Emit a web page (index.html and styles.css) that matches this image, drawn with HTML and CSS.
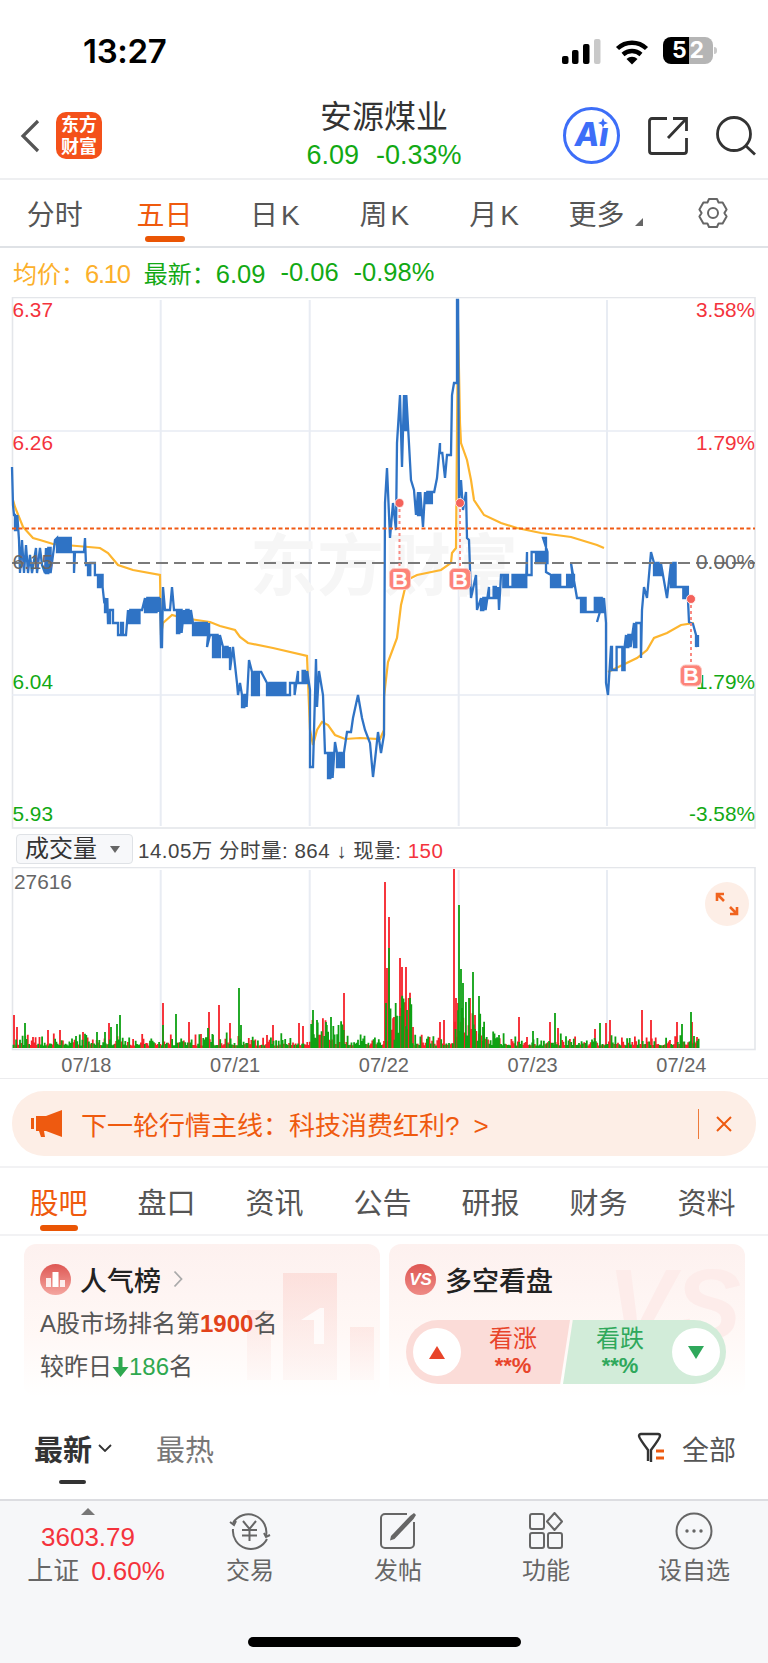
FILE: index.html
```html
<!DOCTYPE html>
<html>
<head>
    <title>安源煤业</title>
    <link rel="stylesheet" href="styles.css">
</head>
<body>
    <div class="page">
        <div class="status-bar">
            <div class="clock">13:27</div>
            <div class="status-icons">
                <svg class="signal" width="40" height="26" viewBox="0 0 40 26">
                    <rect x="1" y="17" width="6.5" height="8" rx="2" fill="#000"/>
                    <rect x="11" y="11" width="6.5" height="14" rx="2" fill="#000"/>
                    <rect x="22" y="5" width="6.5" height="20" rx="2" fill="#000"/>
                    <rect x="33" y="0" width="6.5" height="25" rx="2" fill="#c9c9c9"/>
                </svg>
                <svg class="wifi" width="34" height="26" viewBox="0 0 34 26">
                    <path d="M2.5 9.5 A21 21 0 0 1 31.5 9.5" fill="none" stroke="#000" stroke-width="4.4"/>
                    <path d="M8 15.5 A13.5 13.5 0 0 1 26 15.5" fill="none" stroke="#000" stroke-width="4.4"/>
                    <path d="M11.5 20 A8 8 0 0 1 22.5 20 L17 25.5 Z" fill="#000"/>
                </svg>
                <div class="battery"><span>5</span><span>2</span></div>
            </div>
        </div>

        <div class="nav-bar">
            <div class="nav-left">
                <svg width="20" height="34" viewBox="0 0 20 34">
                    <polyline points="18,2 3,17 18,32" fill="none" stroke="#555" stroke-width="3.2"/>
                </svg>
                <div class="logo">东方<br>财富</div>
            </div>
            <div class="nav-title">
                <div class="stock-name">安源煤业</div>
                <div class="stock-price"><span>6.09</span><span>-0.33%</span></div>
            </div>
            <div class="nav-right">
                <div class="ai-badge">Aı<svg class="ai-star" width="10" height="10" viewBox="0 0 10 10"><path d="M5 0 L6.4 3.6 L10 5 L6.4 6.4 L5 10 L3.6 6.4 L0 5 L3.6 3.6 Z" fill="#3d6ef8"/></svg></div>
                <svg width="40" height="40" viewBox="0 0 40 40">
                    <path d="M19 2.5 H4 a2.5 2.5 0 0 0 -2.5 2.5 V35 a2.5 2.5 0 0 0 2.5 2.5 H36 a2.5 2.5 0 0 0 2.5 -2.5 V22" fill="none" stroke="#333" stroke-width="2.8"/>
                    <path d="M20 22 L38 3 M25 2.5 H38.5 V15" fill="none" stroke="#333" stroke-width="2.8"/>
                </svg>
                <svg width="40" height="40" viewBox="0 0 40 40">
                    <circle cx="18" cy="18" r="16.5" fill="none" stroke="#333" stroke-width="2.8"/>
                    <path d="M30 30 L39 38.5" fill="none" stroke="#333" stroke-width="2.8"/>
                </svg>
            </div>
        </div>

        <div class="period-tabs">
            <div class="period-tab">分时</div>
            <div class="period-tab active">五日</div>
            <div class="period-tab k-tab">日K</div>
            <div class="period-tab k-tab">周K</div>
            <div class="period-tab k-tab">月K</div>
            <div class="period-tab more">更多<i class="corner"></i></div>
            <div class="period-tab">
                <svg width="32" height="32" viewBox="0 0 32 32">
                    <path d="M12 2 H20 L21.6 5.6 L25.6 5.4 L29.6 12.4 L27.4 16 L29.6 19.6 L25.6 26.6 L21.6 26.4 L20 30 H12 L10.4 26.4 L6.4 26.6 L2.4 19.6 L4.6 16 L2.4 12.4 L6.4 5.4 L10.4 5.6 Z" fill="none" stroke="#666" stroke-width="2" stroke-linejoin="round"/>
                    <circle cx="16" cy="16" r="5" fill="none" stroke="#666" stroke-width="2"/>
                </svg>
            </div>
        </div>

        <div class="quote-row">
            <span class="avg">均价：<b>6.10</b></span>
            <span class="latest">最新：<b>6.09</b></span>
            <span class="latest"><b>-0.06</b></span>
            <span class="latest"><b>-0.98%</b></span>
        </div>

        <!-- svg coords are page coords, see viewBox -->
        <svg class="price-chart" width="768" height="533" viewBox="0 297 768 533">
            <rect x="12.5" y="297.5" width="742.5" height="530.5" class="frame"/>
            <path class="grid" d="M160.7 300 V826 M309.7 300 V826 M458.7 300 V826 M607 300 V826"/>
            <path class="grid-h" d="M12 431 H755 M12 695 H755"/>
            <text x="250" y="590" class="watermark">东方财富</text>

            <polyline id="avg-line" class="avg-line"/>
            <polyline id="price-line" class="price-line"/>

            <line x1="12" y1="528.5" x2="755" y2="528.5" class="prev-high"/>
            <line x1="12" y1="563" x2="755" y2="563" class="prev-close"/>

            <text x="12.5" y="317" class="label up">6.37</text>
            <text x="12.5" y="450" class="label up">6.26</text>
            <text x="12.5" y="569" class="label flat">6.15</text>
            <text x="12.5" y="689" class="label down">6.04</text>
            <text x="12.5" y="821" class="label down">5.93</text>
            <text x="755" y="317" class="label right up">3.58%</text>
            <text x="755" y="450" class="label right up">1.79%</text>
            <text x="755" y="569" class="label right flat">0.00%</text>
            <text x="755" y="689" class="label right down">-1.79%</text>
            <text x="755" y="821" class="label right down">-3.58%</text>

            <g class="trade">
                <line x1="399.5" y1="503" x2="399.5" y2="570"/>
                <circle cx="399.5" cy="503" r="4.5"/>
                <rect x="389.5" y="568.5" width="21" height="21" rx="5"/>
                <text x="400" y="586.5">B</text>
            </g>
            <g class="trade">
                <line x1="460" y1="503" x2="460" y2="570"/>
                <circle cx="460" cy="503" r="4.5"/>
                <rect x="449.5" y="568.5" width="21" height="21" rx="5"/>
                <text x="460" y="586.5">B</text>
            </g>
            <g class="trade">
                <line x1="691" y1="599" x2="691" y2="666"/>
                <circle cx="691" cy="599" r="4.5"/>
                <rect x="680.5" y="665" width="21" height="21" rx="5"/>
                <text x="691" y="683">B</text>
            </g>
        </svg>

        <div class="volume-head">
            <div class="volume-select">成交量<i class="caret"></i></div>
            <div class="volume-text">14.05万 分时量: 864 ↓ 现量: <span class="red">150</span></div>
        </div>

        <div class="volume-chart">
            <svg width="768" height="185" viewBox="0 867 768 185">
                <rect x="12.5" y="867.5" width="742.5" height="182" class="frame"/>
                <path class="grid" d="M160.7 870 V1048 M309.7 870 V1048 M458.7 870 V1048 M607 870 V1048"/>
                <path id="vol-red" class="vol-red"/>
                <path id="vol-green" class="vol-green"/>
                <text x="14" y="889" class="label flat">27616</text>
            </svg>
            <div class="expand-btn">
                <svg width="44" height="44" viewBox="0 0 44 44">
                    <path d="M12 19 V12 H19 M12 12 L19 19 M25 25 L32 32 M32 25 V32 H25" fill="none" stroke="#f0631e" stroke-width="2.6"/>
                </svg>
            </div>
        </div>

        <div class="date-axis">
            <div>07/18</div>
            <div>07/21</div>
            <div>07/22</div>
            <div>07/23</div>
            <div>07/24</div>
        </div>

        <div class="banner">
            <svg width="32" height="28" viewBox="0 0 32 28">
                <rect x="0" y="8" width="3" height="11" fill="#ee5a10"/>
                <path d="M5 6 H15 L31 0 V27 L15 21 H13 L14 27 H10 L8 21 H5 Z" fill="#ee5a10"/>
            </svg>
            <div class="banner-text">下一轮行情主线：科技消费红利?<span class="banner-arrow">&gt;</span></div>
            <div class="banner-divider"></div>
            <svg width="16" height="16" viewBox="0 0 16 16">
                <path d="M1 1 L15 15 M15 1 L1 15" stroke="#ee5a10" stroke-width="2" fill="none"/>
            </svg>
        </div>

        <div class="detail-tabs">
            <div class="detail-tab active">股吧</div>
            <div class="detail-tab">盘口</div>
            <div class="detail-tab">资讯</div>
            <div class="detail-tab">公告</div>
            <div class="detail-tab">研报</div>
            <div class="detail-tab">财务</div>
            <div class="detail-tab">资料</div>
        </div>

        <div class="cards">
            <div class="card">
                <svg class="card-art" width="356" height="153" viewBox="0 0 356 153">
                    <defs>
                        <linearGradient id="bar-fade" x1="0" y1="0" x2="0" y2="1">
                            <stop offset="0" stop-color="#fbd3ce"/>
                            <stop offset="1" stop-color="#fdf3f1"/>
                        </linearGradient>
                    </defs>
                    <rect x="223" y="66" width="24" height="70" fill="url(#bar-fade)" opacity="0.4"/>
                    <rect x="259" y="29" width="54" height="107" fill="url(#bar-fade)" opacity="0.6"/>
                    <rect x="326" y="83" width="24" height="53" fill="url(#bar-fade)" opacity="0.4"/>
                    <path d="M277 76 L296 64 H300 V100 H290 V76 Z" fill="#fff" opacity="0.75"/>
                </svg>
                <div class="card-head">
                    <svg class="card-icon" width="31" height="31" viewBox="0 0 31 31">
                        <defs>
                            <linearGradient id="rank-fill" x1="0" y1="0" x2="0" y2="1">
                                <stop offset="0" stop-color="#de5753"/>
                                <stop offset="1" stop-color="#f4a6a0"/>
                            </linearGradient>
                        </defs>
                        <circle cx="15.5" cy="15.5" r="15.5" fill="url(#rank-fill)"/>
                        <rect x="6" y="14" width="5" height="9" fill="#fff" opacity="0.85"/>
                        <rect x="12.5" y="8" width="6" height="15" fill="#fff"/>
                        <rect x="20" y="16" width="5" height="7" fill="#fff" opacity="0.85"/>
                    </svg>
                    <div class="card-title">人气榜</div>
                    <svg class="card-more" width="10" height="18" viewBox="0 0 10 18">
                        <polyline points="1.5,1.5 8.5,9 1.5,16.5" fill="none" stroke="#aaa" stroke-width="1.8"/>
                    </svg>
                </div>
                <div class="rank-line first">A股市场排名第<b>1900</b>名</div>
                <div class="rank-line">较昨日<svg width="17" height="22" viewBox="0 0 17 22"><path d="M6.5 1 H10.5 V11 H16.5 L8.5 21 L0.5 11 H6.5 Z" fill="#2fa84f"/></svg><span class="rank-green">186</span>名</div>
            </div>
            <div class="card">
                <div class="card-vs">VS</div>
                <div class="card-head">
                    <div class="vs-icon">VS</div>
                    <div class="card-title">多空看盘</div>
                </div>
                <div class="vote">
                    <div class="vote-side bull">
                        <div class="vote-btn"><i class="arrow-up"></i></div>
                        <div class="vote-text">看涨<small>**%</small></div>
                    </div>
                    <div class="vote-side bear">
                        <div class="vote-text">看跌<small>**%</small></div>
                        <div class="vote-btn"><i class="arrow-down"></i></div>
                    </div>
                </div>
            </div>
        </div>

        <div class="list-tabs">
            <div class="list-tab active">最新<svg width="14" height="8" viewBox="0 0 14 8"><polyline points="1,1 7,7 13,1" fill="none" stroke="#333" stroke-width="1.8"/></svg></div>
            <div class="list-tab">最热</div>
            <div class="list-filter">
                <svg width="30" height="32" viewBox="0 0 30 32">
                    <path d="M3 4 Q3 2 5 2 H22 Q24 2 24 4 Q24 6 15 18 V30 M3 4 Q3 6 12 18 V29" fill="none" stroke="#333" stroke-width="2.4"/>
                    <path d="M20 19 H28 M20 26 H28" stroke="#ee5a10" stroke-width="3"/>
                </svg>
                全部
            </div>
        </div>

        <div class="bottom-bar">
            <div class="index-cell">
                <i class="index-tri"></i>
                <div class="index-value">3603.79</div>
                <div class="index-name">上证<span class="red">0.60%</span></div>
            </div>
            <div class="bottom-item">
                <svg width="44" height="38" viewBox="0 0 44 38">
                    <path d="M5 11 A18 18 0 0 1 38 24 M39 27 A18 18 0 0 1 5 17" fill="none" stroke="#666" stroke-width="2"/>
                    <path d="M2 10 L6 13 L8 9 M36 21 L38 25 L42 23" fill="none" stroke="#666" stroke-width="2"/>
                    <path d="M15 9 L21.5 17 L28 9 M21.5 17 V29 M14 18 H29 M14 23.5 H29" fill="none" stroke="#666" stroke-width="2"/>
                </svg>
                <div>交易</div>
            </div>
            <div class="bottom-item">
                <svg width="38" height="38" viewBox="0 0 38 38">
                    <path d="M28 2 H6 a4 4 0 0 0 -4 4 V32 a4 4 0 0 0 4 4 H31 a4 4 0 0 0 4 -4 V10" fill="none" stroke="#666" stroke-width="2"/>
                    <path d="M12 24 L31 4 L35 1 L37 3 L34.5 7 L15.5 27 L11 28.5 Z" fill="#666"/>
                </svg>
                <div>发帖</div>
            </div>
            <div class="bottom-item">
                <svg width="36" height="38" viewBox="0 0 36 38">
                    <rect x="2" y="2" width="14" height="15" rx="2" fill="none" stroke="#666" stroke-width="2"/>
                    <path d="M26.5 1 L34 9.5 L26.5 18 L19 9.5 Z" fill="none" stroke="#666" stroke-width="2" stroke-linejoin="round"/>
                    <rect x="2" y="21" width="14" height="15" rx="2" fill="none" stroke="#666" stroke-width="2"/>
                    <rect x="20" y="21" width="14" height="15" rx="2" fill="none" stroke="#666" stroke-width="2"/>
                </svg>
                <div>功能</div>
            </div>
            <div class="bottom-item">
                <svg width="38" height="38" viewBox="0 0 38 38">
                    <circle cx="19" cy="19" r="17.5" fill="none" stroke="#666" stroke-width="2"/>
                    <circle cx="12" cy="19" r="1.7" fill="#666"/>
                    <circle cx="19" cy="19" r="1.7" fill="#666"/>
                    <circle cx="26" cy="19" r="1.7" fill="#666"/>
                </svg>
                <div>设自选</div>
            </div>
            <div class="home-indicator"></div>
        </div>
    </div>

    <script src="chart.js"></script>
</body>
</html>
```

FILE: styles.css
```css
body {
    margin: 0;
    background: white;
    font-family: "Liberation Sans", "Noto Sans CJK SC", sans-serif;
    color: #333;
}

.page {
    width: 768px;
    height: 1663px;
    overflow: hidden;
}

.red { color: #f4333c; }

/* status bar */
.status-bar {
    height: 90px;
    display: flex;
    justify-content: space-between;
    box-sizing: border-box;
    padding: 36px 55px 0 83px;
}

.clock {
    font-family: Inter, sans-serif;
    font-size: 33px;
    font-weight: 600;
    line-height: 30px;
    letter-spacing: -0.3px;
    color: #000;
}

.status-icons {
    display: flex;
    align-items: flex-start;
    gap: 14px;
}

.signal { margin-top: 3px; }
.wifi { margin-top: 3px; }

.battery {
    width: 50px;
    height: 27px;
    margin-top: 1px;
    border-radius: 8px;
    background: linear-gradient(90deg, #000 52%, #b5b5b5 52%);
    color: white;
    display: flex;
    justify-content: center;
    gap: 3px;
    font-family: Inter, sans-serif;
    font-size: 23px;
    font-weight: 700;
    line-height: 27px;
    position: relative;
}

.battery::after {
    content: "";
    position: absolute;
    right: -4px;
    top: 10px;
    width: 3px;
    height: 7px;
    border-radius: 0 3px 3px 0;
    background: #c9c9c9;
}

/* nav */
.nav-bar {
    height: 90px;
    box-sizing: border-box;
    border-bottom: 2px solid #eeeff1;
    display: grid;
    grid-template-columns: 1fr auto 1fr;
    align-items: center;
    padding: 3px 12px 0 12px;
}

.nav-left {
    display: flex;
    align-items: center;
    gap: 16px;
    margin-left: 8px;
}

.logo {
    width: 46px;
    height: 47px;
    border-radius: 10px;
    background: #f4511a;
    color: white;
    font-size: 18px;
    font-weight: 700;
    line-height: 22px;
    text-align: center;
    padding-top: 2px;
    box-sizing: border-box;
}

.nav-title {
    text-align: center;
    margin-top: -4px;
}

.stock-name {
    font-size: 32px;
    line-height: 42px;
    color: #333;
}

.stock-price {
    font-size: 27px;
    line-height: 34px;
    color: #12a914;
    display: flex;
    justify-content: center;
    gap: 17px;
}

.nav-right {
    display: flex;
    align-items: center;
    justify-content: flex-end;
    gap: 28px;
}

.ai-badge {
    width: 57px;
    height: 57px;
    box-sizing: border-box;
    border: 3px solid #3d6ef8;
    border-radius: 50%;
    color: #3d6ef8;
    font-family: Inter, sans-serif;
    font-size: 32px;
    font-weight: 800;
    font-style: italic;
    line-height: 50px;
    text-align: center;
    position: relative;
}

.ai-star {
    position: absolute;
    right: 9px;
    top: 8px;
}

/* period tabs */
.period-tabs {
    height: 68px;
    box-sizing: border-box;
    border-bottom: 2px solid #dfe2e6;
    display: grid;
    grid-template-columns: repeat(7, 109.7px);
}

.period-tab {
    display: flex;
    align-items: center;
    justify-content: center;
    font-size: 28px;
    color: #555;
    position: relative;
}

.k-tab {
    letter-spacing: 3px;
    padding-left: 4px;
}

.period-tab.active {
    color: #ef5a0e;
}

.period-tab.active::after {
    content: "";
    position: absolute;
    bottom: 4px;
    left: 35px;
    width: 40px;
    height: 6px;
    border-radius: 3px;
    background: #ea5504;
}

.period-tab.more {
    justify-content: flex-start;
    padding-left: 20px;
}

.corner {
    position: absolute;
    left: 87px;
    bottom: 20px;
    width: 0;
    height: 0;
    border-left: 8px solid transparent;
    border-bottom: 8px solid #666;
}

/* quote row */
.quote-row {
    height: 49px;
    display: flex;
    align-items: center;
    gap: 15px;
    padding-left: 13px;
    font-size: 24px;
}

.quote-row b {
    font-size: 25.5px;
    font-weight: 400;
}

.avg {
    color: #fcb02b;
    margin-right: -1px;
}

.avg b {
    letter-spacing: -1.2px;
}

.latest { color: #12a914; }

/* price chart */
.price-chart,
.volume-chart svg {
    display: block;
}

.frame {
    fill: none;
    stroke: #e4e6ea;
    stroke-width: 1.6;
}

.grid {
    fill: none;
    stroke: #e8ecf3;
    stroke-width: 2;
}

.grid-h {
    fill: none;
    stroke: #e8ecf3;
    stroke-width: 1.6;
}

.watermark {
    font-size: 67px;
    font-weight: 700;
    fill: #f6f6f6;
}

.avg-line {
    fill: none;
    stroke: #fdb52e;
    stroke-width: 2.2;
}

.price-line {
    fill: none;
    stroke: #2f73c5;
    stroke-width: 2.3;
}

.prev-high {
    stroke: #f05a14;
    stroke-width: 2;
    stroke-dasharray: 4 2.5;
}

.prev-close {
    stroke: #7a7a7a;
    stroke-width: 2;
    stroke-dasharray: 12 6;
}

.label {
    font-size: 20.8px;
}

.label.right { text-anchor: end; }
.label.up { fill: #f4333c; }
.label.down { fill: #12a914; }
.label.flat { fill: #666; }

.trade line {
    stroke: #f98a82;
    stroke-width: 2;
    stroke-dasharray: 3 3;
}

.trade circle {
    fill: #f4625b;
    stroke: white;
    stroke-width: 0.8;
}

.trade rect {
    fill: #fd8378;
    stroke: #fbc7c0;
    stroke-width: 1;
}

.trade text {
    fill: white;
    font-size: 22px;
    font-weight: 700;
    text-anchor: middle;
}

/* volume */
.volume-head {
    height: 37px;
    display: flex;
    align-items: center;
    gap: 5px;
    padding-left: 16px;
}

.volume-select {
    width: 117px;
    height: 30px;
    box-sizing: border-box;
    border: 1px solid #dfe2e6;
    border-radius: 4px;
    background: #f7f8fa;
    font-size: 24px;
    line-height: 28px;
    padding-left: 8px;
    color: #333;
    position: relative;
}

.caret {
    position: absolute;
    right: 12px;
    top: 11px;
    border-left: 5px solid transparent;
    border-right: 5px solid transparent;
    border-top: 7px solid #666;
}

.volume-text {
    font-size: 20.5px;
    letter-spacing: 0.5px;
    color: #444;
}

.volume-chart {
    height: 185px;
    position: relative;
}

.vol-red {
    fill: none;
    stroke: #f5222a;
    stroke-width: 1.8;
}

.vol-green {
    fill: none;
    stroke: #0ea113;
    stroke-width: 1.8;
}

.expand-btn {
    position: absolute;
    left: 705px;
    top: 15px;
    width: 44px;
    height: 44px;
    border-radius: 50%;
    background: #fdeee6;
}

.date-axis {
    height: 27px;
    box-sizing: border-box;
    border-bottom: 1px solid #ececee;
    display: grid;
    grid-template-columns: repeat(5, 148.75px);
    padding-left: 12px;
    font-size: 20px;
    line-height: 26px;
    text-align: center;
    color: #666;
}

/* banner */
.banner {
    height: 65px;
    margin: 12px 12px 10px;
    border-radius: 32px;
    background: #fdeee6;
    display: flex;
    align-items: center;
    padding: 0 24px 0 19px;
    gap: 18px;
    color: #ef5a0e;
}

.banner-text {
    font-size: 26px;
    flex: 1;
}

.banner-arrow {
    margin-left: 14px;
}

.banner-divider {
    width: 1px;
    height: 30px;
    background: #ee7a3a;
    margin-right: -1px;
}

/* detail tabs */
.detail-tabs {
    height: 70px;
    box-sizing: border-box;
    border-top: 2px solid #f2f2f4;
    border-bottom: 2px solid #f2f2f4;
    display: grid;
    grid-template-columns: repeat(7, 108px);
    padding-left: 4.5px;
}

.detail-tab {
    display: flex;
    align-items: center;
    justify-content: center;
    font-size: 29px;
    color: #555;
    position: relative;
}

.detail-tab.active {
    color: #ef5a0e;
}

.detail-tab.active::after {
    content: "";
    position: absolute;
    bottom: 3px;
    left: 35px;
    width: 38px;
    height: 6px;
    border-radius: 3px;
    background: #ea5504;
}

/* cards */
.cards {
    display: grid;
    grid-template-columns: 356px 356px;
    gap: 9px;
    padding: 8px 0 0 24px;
    height: 161px;
    box-sizing: border-box;
}

.card {
    border-radius: 12px;
    background: linear-gradient(180deg, #fdf1ef 0%, #fff8f6 60%, #ffffff 100%);
    position: relative;
    overflow: hidden;
    padding: 19px 0 0 16px;
    box-sizing: border-box;
}

.card-art {
    position: absolute;
    left: 0;
    top: 0;
}

.card-vs {
    position: absolute;
    right: 4px;
    top: 2px;
    font-size: 100px;
    font-weight: 700;
    font-style: italic;
    line-height: 116px;
    color: #fdecea;
}

.card-head {
    display: flex;
    align-items: center;
    gap: 9px;
    height: 32px;
    position: relative;
}

.card-icon {
    flex: none;
}

.card-title {
    font-size: 27px;
    font-weight: 500;
    color: #222;
}

.card-more {
    margin-left: 3px;
}

.vs-icon {
    width: 31px;
    height: 31px;
    border-radius: 50%;
    background: linear-gradient(180deg, #de5753, #ee8a85);
    color: white;
    font-size: 17px;
    font-weight: 700;
    font-style: italic;
    line-height: 31px;
    text-align: center;
}

.rank-line {
    font-size: 24px;
    line-height: 43px;
    color: #555;
    position: relative;
    display: flex;
    align-items: center;
}

.rank-line.first {
    margin-top: 7px;
}

.rank-line b {
    color: #e2421a;
    font-weight: 700;
}

.rank-green {
    color: #2fa84f;
}

.vote {
    position: absolute;
    left: 17px;
    top: 76px;
    width: 320px;
    height: 64px;
    border-radius: 32px;
    overflow: hidden;
    display: flex;
}

.vote-side {
    height: 64px;
    display: flex;
    align-items: center;
    box-sizing: border-box;
}

.bull {
    width: 164px;
    background: #fbdcd8;
    color: #e8442a;
    clip-path: polygon(0 0, 100% 0, 94% 100%, 0 100%);
    padding-left: 7px;
    gap: 28px;
}

.bear {
    width: 163px;
    margin-left: -7px;
    background: #d2ecd9;
    color: #2fa85b;
    clip-path: polygon(6% 0, 100% 0, 100% 100%, 0 100%);
    padding: 0 6px 0 33px;
    justify-content: space-between;
}

.vote-btn {
    width: 48px;
    height: 48px;
    border-radius: 50%;
    background: white;
    display: flex;
    align-items: center;
    justify-content: center;
    flex: none;
}

.arrow-up {
    border-left: 8px solid transparent;
    border-right: 8px solid transparent;
    border-bottom: 13px solid #e8442a;
}

.arrow-down {
    border-left: 8px solid transparent;
    border-right: 8px solid transparent;
    border-top: 13px solid #2fa85b;
}

.vote-text {
    font-size: 24px;
    line-height: 28px;
    text-align: center;
}

.vote-text small {
    display: block;
    font-size: 22px;
    font-weight: 700;
    line-height: 26px;
}

/* list tabs */
.list-tabs {
    height: 102px;
    display: flex;
    align-items: center;
    padding: 0 32px 0 34px;
    font-size: 29px;
    color: #777;
}

.list-tab {
    position: relative;
    display: flex;
    align-items: center;
    gap: 6px;
    margin-right: 44px;
}

.list-tab.active {
    color: #333;
    font-weight: 700;
}

.list-tab.active::after {
    content: "";
    position: absolute;
    left: 25px;
    bottom: -15px;
    width: 27px;
    height: 4px;
    border-radius: 2px;
    background: #333;
}

.list-filter {
    margin-left: auto;
    display: flex;
    align-items: center;
    gap: 16px;
    color: #555;
    font-size: 27px;
}

/* bottom bar */
.bottom-bar {
    height: 164px;
    box-sizing: border-box;
    border-top: 2px solid #dcdde1;
    background: #f6f7f9;
    display: grid;
    grid-template-columns: 176px repeat(4, 148px);
    position: relative;
}

.index-cell {
    display: flex;
    flex-direction: column;
    align-items: center;
    padding-top: 7px;
}

.index-tri {
    border-left: 7px solid transparent;
    border-right: 7px solid transparent;
    border-bottom: 7px solid #777;
}

.index-value {
    font-size: 26px;
    line-height: 30px;
    margin-top: 7px;
    color: #f4333c;
}

.index-name {
    font-size: 26px;
    line-height: 36px;
    margin-top: 1px;
    margin-left: 16px;
    color: #666;
    display: flex;
    gap: 12px;
    white-space: nowrap;
}

.bottom-item {
    display: flex;
    flex-direction: column;
    align-items: center;
    padding-top: 11px;
    gap: 5px;
    font-size: 24px;
    line-height: 32px;
    color: #666;
}

.home-indicator {
    position: absolute;
    left: 248px;
    top: 136px;
    width: 273px;
    height: 10px;
    border-radius: 5px;
    background: black;
}
```

FILE: chart.js
```js
// small seeded random so the picture is the same each load
let seed = 17;
function rnd() {
    seed = (seed * 1664525 + 1013904223) % 4294967296;
    return seed / 4294967296;
}

// [x, y] is a point, [x0, x1, yA, yB] is a stretch flipping between two prices
const pricePoints = [
    // 07/18
    [12,467],[13,505],[14,515],[15,19,515,530],[19,540],[20,573],[22,540],[24,573],[26,545],[28,573],[30,555],[32,573],
    [36,548],[37,573],[40,548],[42,565],[45,573],[46,52,548,573],[55,540],[57,73,538,552],[74,552],[74,573],[75,552],
    [84,552],[85,538],[86,565],[89,565],[88,95,563,575],[98,103,575,587],[104,600],[105,108,598,612],[108,623],[110,623],
    [110,610],[113,610],[113,623],[118,623],[118,635],[121,635],[121,623],[123,623],[123,635],[126,635],[128,141,610,623],
    [142,610],[145,159,598,612],[160,598],
    // 07/21
    [161,647],[162,647],[163,587],[165,610],[170,610],[172,587],[174,610],[176,610],[177,183,610,633],[184,193,610,623],
    [193,210,623,635],[207,647],[210,635],[213,220,635,657],[223,230,647,657],[230,670],[233,647],[237,683],[238,695],
    [240,683],[242,247,695,707],[249,660],[252,263,672,695],[267,295,683,695],[298,308,671,683],
    // 07/22
    [310,690],[310,767],[313,767],[316,659],[317,707],[319,671],[323,695],[325,753],[328,333,753,778],[335,742],[337,345,753,767],
    [347,732],[351,732],[353,718],[358,695],[362,718],[365,730],[370,743],[373,777],[375,760],[378,732],[381,753],[384,735],
    [385,503],[387,468],[390,538],[393,503],[396,530],[397,443],[400,395],[402,467],[404,408,395,430],[411,480],[414,490],
    [416,515],[418,422,492,515],[423,527],[425,436,492,503],[437,478],[440,444,443,453],[445,478],[447,455],[451,455],
    [452,395],[454,383],[457,383],[457,300],[458,300],[459,503],[461,480],[463,510],[466,492],[467,538],
    // 07/23
    [469,540],[471,598],[476,575],[477,610],[481,486,598,610],[489,499,587,598],[499,610],[501,527,575,587],[527,532,552,575],
    [536,549,552,563],[543,538],[546,538],[546,572],[551,576,575,587],[571,563],[577,598],[581,604,598,612],[597,622],[604,598],
    [605,610],[606,623],
    // 07/24
    [606,683],[608,695],[611,647],[612,618,647,670],[620,625,647,670],[626,632,635,647],[634,642,623,647],[641,658],[642,610],
    [644,587],[647,598],[651,552],[654,662,563,575],[667,598],[671,679,563,587],[681,689,587,598],[689,622],[693,624],[696,635],
    [696,647],[698,635],[698,647]
];

const avgPoints = [
    [13,500],[15,507],[23,527],[33,538],[40,540],[53,544],[77,546],[100,548],[108,553],[118,565],[133,570],[160,575],
    [161,635],[163,623],[172,615],[183,618],[210,622],[220,626],[235,630],[240,637],[248,643],[273,648],[307,656],
    [310,730],[313,745],[317,730],[322,722],[328,725],[335,735],[345,739],[360,738],[380,739],[384,730],[384,697],
    [388,662],[397,638],[401,605],[407,580],[417,575],[441,570],[451,563],[452,553],[456,548],[458,320],[460,423],
    [461,443],[467,460],[471,480],[474,500],[484,515],[501,523],[517,528],[541,533],[571,537],[597,545],[604,548]
];

const avgDay5 = [
    [608,672],[637,658],[647,650],[654,638],[667,633],[681,625],[694,623]
];

// hand picked tall bars [x, top]
const redPeaks = [
    [14,1015],[17,1027],[48,1030],[60,1030],[83,1032],[109,1023],[163,1003],[189,1022],[201,1034],[209,1012],[219,1005],
    [230,1023],[273,1025],[299,1023],[303,1026],[344,993],[385,882],[387,968],[389,917],[394,1017],[400,958],[402,967],
    [406,967],[413,1027],[440,1022],[444,1020],[454,869],[456,998],[458,1003],[470,998],[475,1015],[519,1017],[550,1022],
    [558,1028],[595,1029],[606,1023],[610,1020],[642,1010],[651,1020],[677,1022],[692,1022],[697,1037]
];
const greenPeaks = [
    [25,1023],[76,1036],[97,1032],[105,1032],[111,1027],[117,1024],[120,1015],[163,1025],[176,1014],[208,1028],[213,1035],
    [239,988],[241,1025],[313,1010],[317,1020],[326,1022],[331,1017],[386,1003],[389,948],[402,997],[407,1010],[410,998],
    [459,905],[461,969],[463,983],[469,998],[473,972],[479,996],[483,1027],[499,1035],[533,1031],[555,1013],[600,1023],
    [682,1024],[691,1012],[694,1036]
];

function expand(list) {
    const out = [];
    list.forEach(p => {
        if (p.length === 2) {
            out.push(p);
            return;
        }
        let high = true;
        for (let x = p[0]; x <= p[1]; x += 2.3) {
            out.push([x, high ? p[2] : p[3]]);
            if (rnd() < 0.85) high = !high;
            out.push([x, high ? p[2] : p[3]]);
        }
    });
    return out;
}

function toPoints(list) {
    return list.map(p => p[0].toFixed(1) + ',' + p[1]).join(' ');
}

document.getElementById('price-line').setAttribute('points', toPoints(expand(pricePoints)));
document.getElementById('avg-line').setAttribute('points', toPoints(avgPoints));

// last day of the average line is cut off from the rest
const avg2 = document.getElementById('avg-line').cloneNode();
avg2.removeAttribute('id');
avg2.setAttribute('points', toPoints(avgDay5));
document.getElementById('avg-line').after(avg2);

// bar height around a given x, the busy stretches after the spikes get tall
function barHeight(x) {
    if (x > 310 && x < 345) return 4 + rnd() * 26;
    if (x > 385 && x < 412) return 6 + rnd() * 50;
    if (x > 454 && x < 485) return 6 + rnd() * 42;
    if (x > 485 && x < 500) return 3 + rnd() * 14;
    return 2.5 + rnd() * rnd() * 14;
}

const base = 1048;
let red = '';
let green = '';
for (let x = 13.5; x < 699; x += 1.3) {
    const bar = 'M' + x.toFixed(1) + ' ' + base + 'V' + (base - barHeight(x)).toFixed(1);
    if (rnd() < 0.5) red += bar;
    else green += bar;
}
redPeaks.forEach(p => { red += 'M' + p[0] + ' ' + base + 'V' + p[1]; });
greenPeaks.forEach(p => { green += 'M' + p[0] + ' ' + base + 'V' + p[1]; });

document.getElementById('vol-red').setAttribute('d', red);
document.getElementById('vol-green').setAttribute('d', green);
```
